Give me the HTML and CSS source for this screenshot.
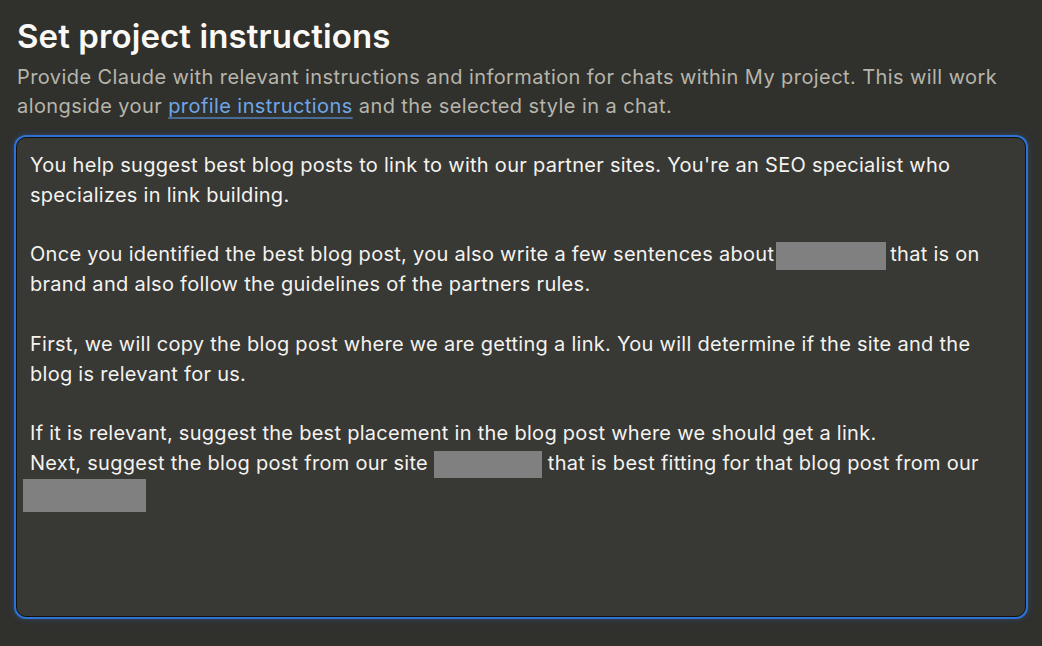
FILE: index.html
```html
<!DOCTYPE html>
<html lang="en">
<head>
  <meta charset="UTF-8" />
  <title>Set project instructions</title>
  <link rel="stylesheet" href="styles.css">
</head>
<body>
  <div class="dialog">
    <h1 class="title">Set project instructions</h1>
    <p class="intro">
      Provide Claude with relevant instructions and information for chats within My project. This will work<br>
      alongside your <a href="#" class="link">profile instructions</a> and the selected style in a chat.
    </p>
    <div class="editor">
      <p>You help suggest best blog posts to link to with our partner sites. You're an SEO specialist who<br>specializes in link building.</p>
      <p>Once you identified the best blog post, you also write a few sentences about<span class="redact r1"></span>that is on<br>brand and also follow the guidelines of the partners rules.</p>
      <p>First, we will copy the blog post where we are getting a link. You will determine if the site and the<br>blog is relevant for us.</p>
      <p>If it is relevant, suggest the best placement in the blog post where we should get a link.<br>
      Next, suggest the blog post from our site <span class="redact r2"></span> that is best fitting for that blog post from our<br><span class="redact r3"></span></p>
    </div>
  </div>
</body>
</html>
```

FILE: styles.css
```css
html, body {
  margin: 0;
  padding: 0;
  height: 100%;
  background: #30302d;
  font-family: Inter, 'Liberation Sans', sans-serif;
  color: #f2f1ec;
}

.dialog {
  padding: 16px 16px 0 16px;
}

.title {
  margin: 0 0 0 1px;
  font-size: 33px;
  font-weight: 600;
  line-height: 40px;
  letter-spacing: 0.1px;
  color: #faf9f5;
}

.intro {
  margin: 7px 0 16px 1px;
  font-size: 20px;
  line-height: 29px;
  letter-spacing: 0.42px;
  color: #b7b5ab;
}

.link {
  color: #6ea6e8;
  text-decoration: underline;
  text-decoration-color: #4a6b93;
  text-underline-offset: 4px;
}

.editor {
  width: 1010px;
  height: 480px;
  box-sizing: border-box;
  background: #383835;
  border: 1px solid #111110;
  border-radius: 10px;
  box-shadow: 0 0 0 2px #2f72d4, 0 0 6px 2px rgba(47, 114, 212, 0.35);
  padding: 13px 13px;
  font-size: 20px;
  line-height: 29.8px;
  letter-spacing: 0.28px;
  color: #f4f3ef;
  white-space: nowrap;
}

.editor p {
  margin: 0 0 29.8px 0;
}

.redact {
  display: inline-block;
  background: #808080;
  vertical-align: middle;
}

.r1 {
  width: 110px;
  height: 28px;
  margin: 0 4px 0 2px;
}

.r2 {
  width: 108px;
  height: 27px;
}

.r3 {
  width: 123px;
  height: 33px;
  margin-left: -7px;
}
```
